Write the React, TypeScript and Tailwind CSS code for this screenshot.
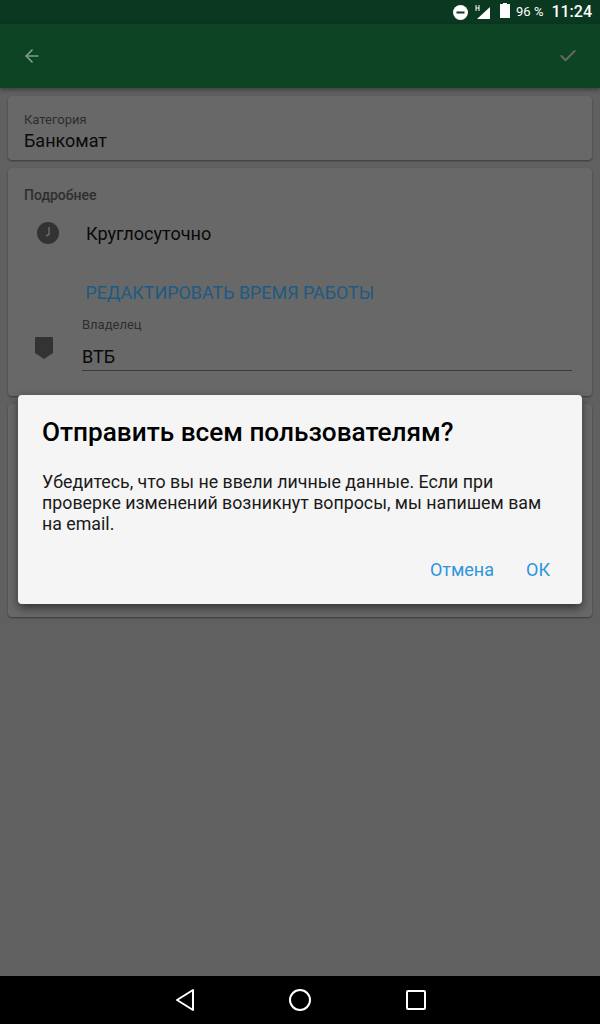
import { ArrowLeft, Check } from "lucide-react";

function StatusBar() {
  return (
    <div className="h-6 shrink-0 bg-[#0a3820] flex items-center justify-end pr-2 text-white">
      <svg width="15" height="15" viewBox="0 0 15 15" className="mr-[7px]">
        <circle cx="7.5" cy="7.5" r="7.5" fill="#fff" />
        <rect x="3.5" y="6.5" width="8" height="2" fill="#0a3820" />
      </svg>
      <svg width="15" height="16" viewBox="0 0 15 16" className="mr-[10px]">
        <path d="M15 3V15H2Z" fill="#fff" />
        <path d="M1 1V7M4 1V7M1 4H4" stroke="#fff" strokeWidth="1" fill="none" />
      </svg>
      <svg width="10" height="15" viewBox="0 0 10 15" className="mr-[6px] mb-[3px]">
        <path d="M3 1V0H7V1H10V15H0V1Z" fill="#fff" />
      </svg>
      <span className="text-[13px] mr-[8px]">96 %</span>
      <span className="text-base font-medium">11:24</span>
    </div>
  );
}

function OwnerIcon() {
  return (
    <svg width="18" height="22" viewBox="0 0 18 22" className="shrink-0">
      <path d="M0 0H18V16L9 22L0 16Z" fill="#333333" />
    </svg>
  );
}

function ClockIcon() {
  return (
    <svg width="22" height="22" viewBox="0 0 22 22" className="shrink-0">
      <circle cx="11" cy="11" r="11" fill="#333333" />
      <path d="M12 5V12.5L9 14" stroke="#6a6a6a" strokeWidth="1.5" fill="none" />
    </svg>
  );
}

export default function App() {
  return (
    <div
      className="relative w-[600px] h-[1024px] flex flex-col bg-[#606060] overflow-hidden"
      style={{ fontFamily: "Roboto, 'Noto Sans', sans-serif" }}
    >
      <StatusBar />
      <header className="h-16 shrink-0 bg-[#0d4423] flex items-center justify-between pl-[22px] pr-[22px] shadow-[0_2px_4px_rgba(0,0,0,0.35)]">
        <ArrowLeft size={20} className="text-[#7f9c8b]" />
        <Check size={20} strokeWidth={2.5} className="text-[#666666]" />
      </header>

      <main className="flex-1 flex flex-col gap-2 px-2 pt-2">
        <section className="h-[64px] bg-[#686868] rounded-sm shadow-[0_1px_2px_rgba(0,0,0,0.4)] px-4 pt-[15px]">
          <div className="text-[13px] leading-[17px] text-[#2e2e2e]">Категория</div>
          <div className="text-lg leading-[24px] text-[#0a0a0a] mt-[1px]">Банкомат</div>
        </section>

        <section className="h-[228px] bg-[#686868] rounded-sm shadow-[0_1px_2px_rgba(0,0,0,0.4)] pl-4 pr-5 pt-[18px]">
          <div className="text-sm leading-[18px] font-medium text-[#2e2e2e]">Подробнее</div>
          <div className="flex items-center mt-[17px] h-[24px] pl-[13px]">
            <ClockIcon />
            <span className="ml-[27px] pt-[1px] text-[18.1px] text-[#0a0a0a]">Круглосуточно</span>
          </div>
          <div className="mt-[36px] ml-[61.5px] text-[17.9px] leading-[24px] text-[#1d5a84]">
            РЕДАКТИРОВАТЬ ВРЕМЯ РАБОТЫ
          </div>
          <div className="flex mt-[11px]">
            <div className="w-[58px] shrink-0 pl-[11px] pt-[21px]">
              <OwnerIcon />
            </div>
            <div className="flex-1">
              <div className="text-[13px] leading-[17px] text-[#2e2e2e]">Владелец</div>
              <div className="text-lg leading-[24px] text-[#0a0a0a] mt-[12px] pb-[1px] border-b border-[#3a3a3a]">
                ВТБ
              </div>
            </div>
          </div>
        </section>

        <section className="h-[213px] bg-[#686868] rounded-sm shadow-[0_1px_2px_rgba(0,0,0,0.4)]" />
      </main>

      <nav className="h-12 shrink-0 bg-black flex items-center justify-center gap-[95px]">
        <svg width="20" height="24" viewBox="0 0 20 24">
          <path d="M19 2V22L3 12Z" fill="none" stroke="#fff" strokeWidth="2" strokeLinejoin="round" />
        </svg>
        <svg width="22" height="22" viewBox="0 0 22 22">
          <circle cx="11" cy="11" r="10" fill="none" stroke="#fff" strokeWidth="2" />
        </svg>
        <svg width="20" height="20" viewBox="0 0 20 20">
          <rect x="1" y="1" width="18" height="18" rx="1" fill="none" stroke="#fff" strokeWidth="2" />
        </svg>
      </nav>

      <div className="absolute left-[18px] top-[395px] w-[564px] h-[209px] bg-[#f5f5f5] rounded-sm shadow-[0_4px_10px_rgba(0,0,0,0.5)] px-6 pt-[20px]">
        <h2 className="text-[26.2px] leading-[35px] font-medium text-black">Отправить всем пользователям?</h2>
        <p className="mt-[21px] text-[17.8px] leading-[21px] text-[#1a1a1a]">
          Убедитесь, что вы не ввели личные данные. Если при проверке изменений возникнут вопросы, мы напишем вам на email.
        </p>
        <div className="flex justify-end gap-8 mt-[24px] pr-2 text-lg leading-[24px] text-[#2e96dc]">
          <button>Отмена</button>
          <button>ОК</button>
        </div>
      </div>
    </div>
  );
}
